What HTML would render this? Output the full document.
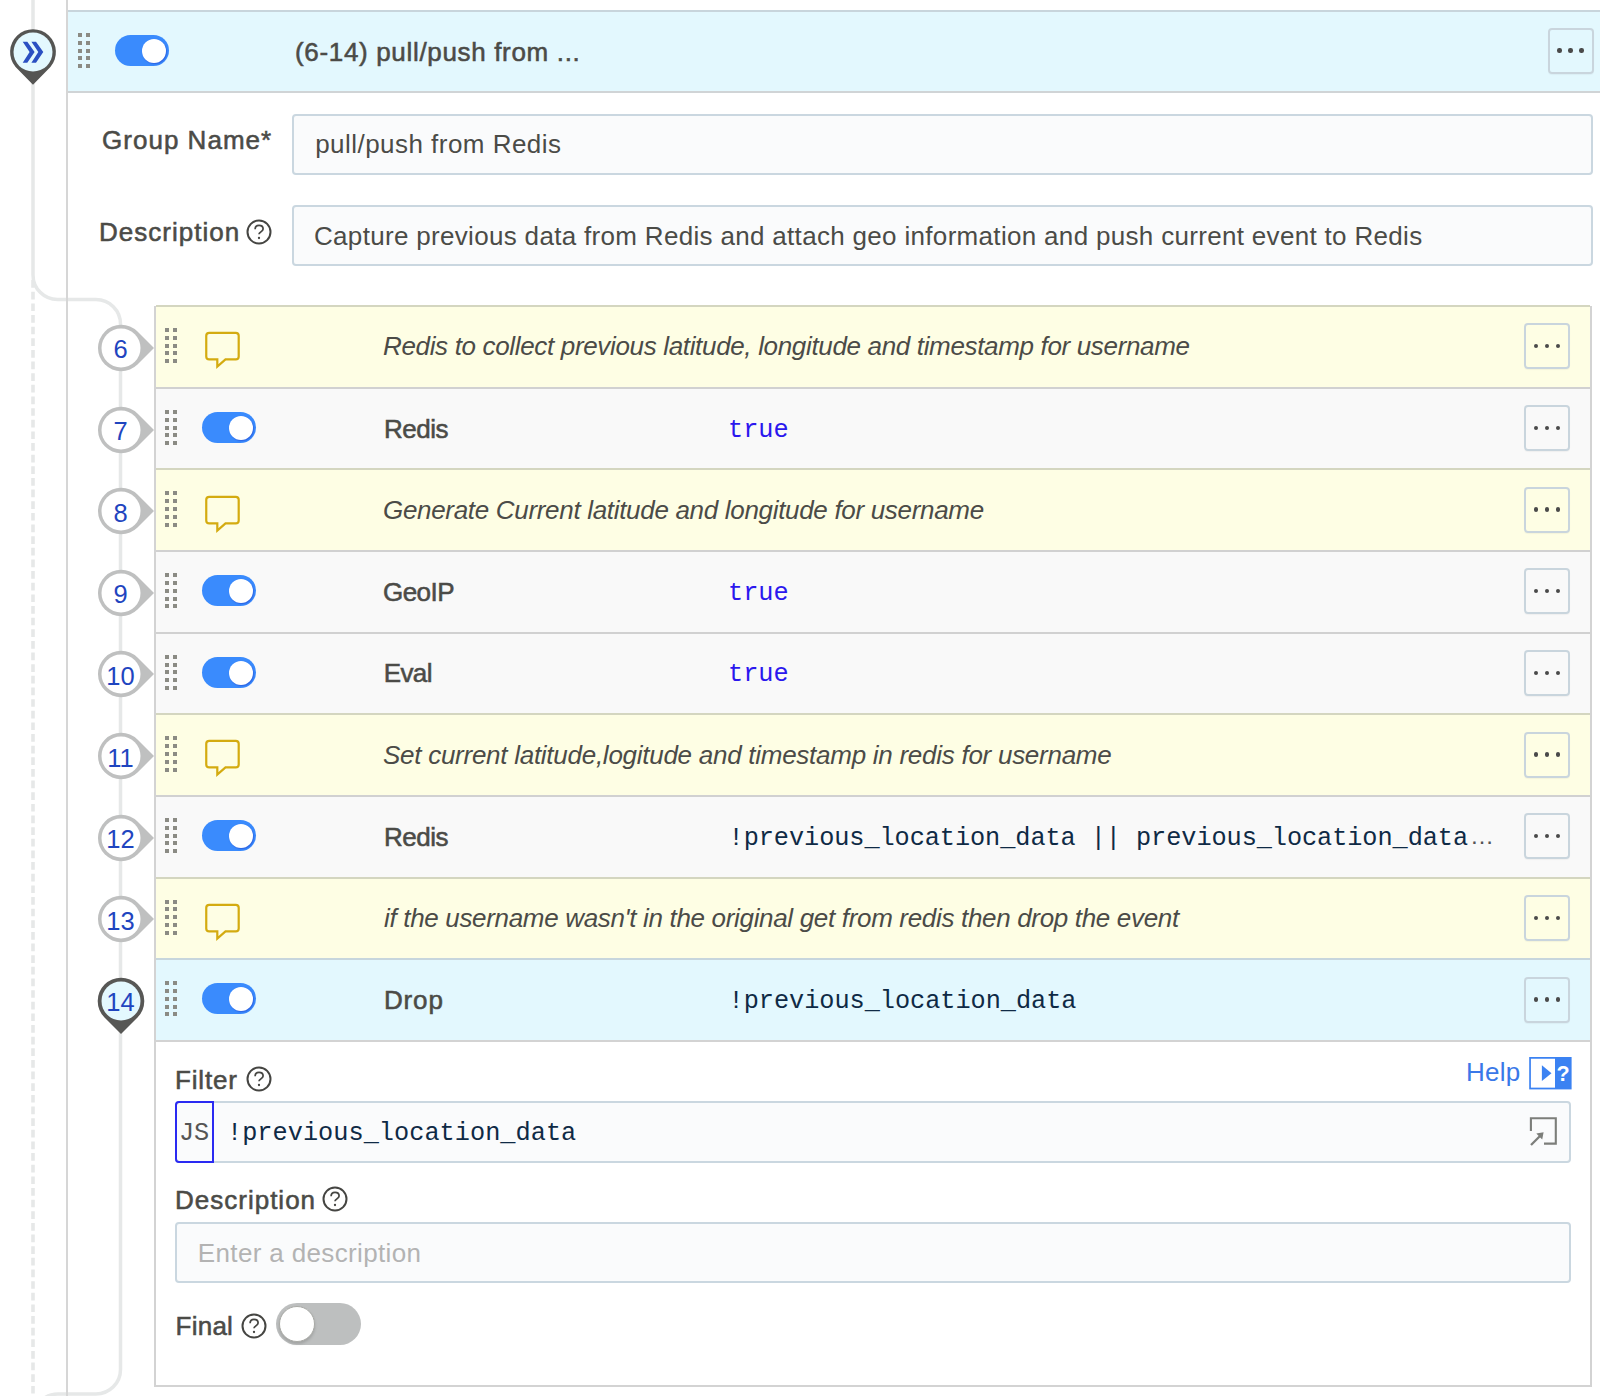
<!DOCTYPE html>
<html><head><meta charset="utf-8"><title>Pipeline</title><style>
*{box-sizing:border-box;margin:0;padding:0}
html,body{width:1600px;height:1396px;overflow:hidden;background:#fff}
body{position:relative;font-family:"Liberation Sans", sans-serif;color:#4b4b47}
.a{position:absolute}
.drag i{position:absolute;width:4px;height:4px;background:#8b8b84}
.tog{position:absolute;border-radius:20px;background:#3a8bfd}
.tog b{position:absolute;border-radius:50%;background:#fff;box-shadow:0.8px 1px 1.5px rgba(30,60,200,.55)}
.btn{position:absolute;border:2px solid #c9d5dd;border-radius:4px;box-shadow:0 1px 1px rgba(0,0,0,.04)}
.btn i{position:absolute;width:4.4px;height:4.4px;margin:-2px 0 0 -2px;border-radius:50%;background:#4a4a4a}
.t{position:absolute;white-space:nowrap;font-size:26px;line-height:30px}
.b{-webkit-text-stroke:0.55px currentColor}
.it{font-style:italic}
.mono{font-family:"Liberation Mono", monospace;font-size:25.27px;line-height:30px}
.inp{position:absolute;border:2px solid #cad7e0;border-radius:4px;background:#fafbfc}
</style></head>
<body>
<svg class="a" style="left:0;top:0" width="1600" height="1396"><path d="M33,0 V275 A24.5,24.5 0 0 0 57.5,299.5 H96 A24.5,24.5 0 0 1 120.5,324 V1369.5 A24.5,24.5 0 0 1 96,1394 H58 A24.5,24.5 0 0 0 33.5,1418.5" fill="none" stroke="#e6e8e8" stroke-width="3.5"/><line x1="33" y1="280.1" x2="33" y2="1396" stroke="#e6e8e8" stroke-width="3.6" stroke-dasharray="7.7 3.94"/></svg>
<div class="a" style="left:66px;top:0;width:2px;height:1396px;background:#d6d6d6"></div>
<div class="a" style="left:68px;top:10px;width:1532px;height:83px;background:#e3f8fe;border-top:2px solid #c8d5dc;border-bottom:2px solid #d0d4d6"></div>
<div class="drag"><i style="left:78px;top:33.0px"></i><i style="left:86px;top:33.0px"></i><i style="left:78px;top:40.8px"></i><i style="left:86px;top:40.8px"></i><i style="left:78px;top:48.6px"></i><i style="left:86px;top:48.6px"></i><i style="left:78px;top:56.4px"></i><i style="left:86px;top:56.4px"></i><i style="left:78px;top:64.2px"></i><i style="left:86px;top:64.2px"></i></div>
<div class="tog" style="left:115px;top:35px;width:54px;height:31px"><b style="width:24px;height:24px;left:26.5px;top:3.5px"></b></div>
<div id="title" class="t b" style="left:295.00px;top:36.50px;letter-spacing:0.666px">(6-14) pull/push from ...</div>
<div class="btn" style="left:1547.5px;top:27.5px;width:46px;height:46px"><i style="left:9.7px;top:20.7px"></i><i style="left:20.7px;top:20.7px"></i><i style="left:31.7px;top:20.7px"></i></div>
<svg class="a" style="left:0;top:20px" width="70" height="80" viewBox="0 20 70 80"><path d="M33,84.7 L15.6,67 A22.9,22.9 0 1 1 50.4,67 Z" fill="#555553"/><circle cx="33" cy="52.1" r="19.5" fill="#e3f8fe"/><path d="M22.7,41.8 H27.3 L34.6,52.1 L27.3,62.7 H22.7 L29.6,52.1 Z M31.4,41.8 H36 L43.3,52.1 L36,62.7 H31.4 L38.3,52.1 Z" fill="#2b4fc2"/></svg>
<div id="gname" class="t b" style="left:102.00px;top:125.21px;letter-spacing:1.020px">Group Name*</div>
<div class="inp" style="left:292px;top:113.5px;width:1301px;height:61px"></div>
<div id="gval" class="t " style="left:315.20px;top:129.25px;letter-spacing:0.463px">pull/push from Redis</div>
<div id="dlab" class="t b" style="left:99.00px;top:217.00px;letter-spacing:1.020px">Description</div>
<svg class="a" style="left:245.39999999999998px;top:217.5px" width="28" height="28" viewBox="-14 -14 28 28"><circle cx="0" cy="0" r="11.5" fill="none" stroke="#454542" stroke-width="2"/><path d="M-3.9,-2.8 C-3.9,-5.3 -2.2,-6.6 0,-6.6 C2.4,-6.6 4.1,-5 4.1,-3 C4.1,-0.6 0,0.2 0,2.2" fill="none" stroke="#454542" stroke-width="1.75"/><circle cx="0" cy="6" r="1.15" fill="#454542"/></svg>
<div class="inp" style="left:292px;top:205px;width:1301px;height:61px"></div>
<div id="dval" class="t " style="left:314.00px;top:220.50px;letter-spacing:0.317px">Capture previous data from Redis and attach geo information and push current event to Redis</div>
<div class="a" style="left:154px;top:306px;width:1438px;height:1081px;border:2px solid #d3d3d3;border-top:none;background:#fff"></div>
<div class="a" style="left:156px;top:306px;width:1434px;height:82.0px;background:#fefee4"></div>
<div class="a" style="left:156px;top:305px;width:1434px;height:2px;background:#d4d6c0"></div>
<div class="drag"><i style="left:165px;top:327.9px"></i><i style="left:173px;top:327.9px"></i><i style="left:165px;top:335.7px"></i><i style="left:173px;top:335.7px"></i><i style="left:165px;top:343.5px"></i><i style="left:173px;top:343.5px"></i><i style="left:165px;top:351.3px"></i><i style="left:173px;top:351.3px"></i><i style="left:165px;top:359.1px"></i><i style="left:173px;top:359.1px"></i></div>
<svg class="a" style="left:203px;top:331px" width="40" height="42" viewBox="0 0 40 42"><path d="M6.25,1.85 H32.7 Q35.7,1.85 35.7,4.85 V25.45 Q35.7,28.45 32.7,28.45 H22.5 L14.3,35.6 V28.45 H6.25 Q3.25,28.45 3.25,25.45 V4.85 Q3.25,1.85 6.25,1.85 Z" fill="none" stroke="#d4ab10" stroke-width="2.2" stroke-linejoin="miter"/></svg>
<div id="c6" class="t it" style="left:383.00px;top:331.30px;letter-spacing:-0.338px">Redis to collect previous latitude, longitude and timestamp for username</div>
<div class="btn" style="left:1524.3px;top:323.2px;width:46px;height:46px"><i style="left:9.7px;top:20.7px"></i><i style="left:20.7px;top:20.7px"></i><i style="left:31.7px;top:20.7px"></i></div>
<svg class="a" style="left:90px;top:317.8px" width="66" height="60" viewBox="-31 -30 66 60"><path d="M33,0 L16.5,16.5 A23.2,23.2 0 1 1 16.5,-16.5 Z" fill="#bfc0c0"/><circle cx="0" cy="0" r="19.5" fill="#fff"/></svg>
<div class="t" style="left:90.5px;width:60px;text-align:center;top:334.3px;font-size:25.5px;color:#1f45bf">6</div>
<div class="a" style="left:156px;top:388px;width:1434px;height:81.5px;background:#f9f9f9"></div>
<div class="a" style="left:156px;top:387px;width:1434px;height:2px;background:#d1d1d1"></div>
<div class="drag"><i style="left:165px;top:409.9px"></i><i style="left:173px;top:409.9px"></i><i style="left:165px;top:417.7px"></i><i style="left:173px;top:417.7px"></i><i style="left:165px;top:425.5px"></i><i style="left:173px;top:425.5px"></i><i style="left:165px;top:433.3px"></i><i style="left:173px;top:433.3px"></i><i style="left:165px;top:441.1px"></i><i style="left:173px;top:441.1px"></i></div>
<div class="tog" style="left:202px;top:412px;width:54px;height:31px"><b style="width:24px;height:24px;left:26.5px;top:3.5px"></b></div>
<div id="n7" class="t b" style="left:384.00px;top:413.61px;letter-spacing:-0.475px">Redis</div>
<div id="v7" class="t mono" style="left:728.00px;top:415.50px;color:#2b17ee">true</div>
<div class="btn" style="left:1524.3px;top:405.2px;width:46px;height:46px"><i style="left:9.7px;top:20.7px"></i><i style="left:20.7px;top:20.7px"></i><i style="left:31.7px;top:20.7px"></i></div>
<svg class="a" style="left:90px;top:399.6px" width="66" height="60" viewBox="-31 -30 66 60"><path d="M33,0 L16.5,16.5 A23.2,23.2 0 1 1 16.5,-16.5 Z" fill="#bfc0c0"/><circle cx="0" cy="0" r="19.5" fill="#fff"/></svg>
<div class="t" style="left:90.5px;width:60px;text-align:center;top:416.1px;font-size:25.5px;color:#1f45bf">7</div>
<div class="a" style="left:156px;top:469.5px;width:1434px;height:81.7px;background:#fefee4"></div>
<div class="a" style="left:156px;top:468px;width:1434px;height:2px;background:#d4d6c0"></div>
<div class="drag"><i style="left:165px;top:491.4px"></i><i style="left:173px;top:491.4px"></i><i style="left:165px;top:499.2px"></i><i style="left:173px;top:499.2px"></i><i style="left:165px;top:507.0px"></i><i style="left:173px;top:507.0px"></i><i style="left:165px;top:514.8px"></i><i style="left:173px;top:514.8px"></i><i style="left:165px;top:522.6px"></i><i style="left:173px;top:522.6px"></i></div>
<svg class="a" style="left:203px;top:494.5px" width="40" height="42" viewBox="0 0 40 42"><path d="M6.25,1.85 H32.7 Q35.7,1.85 35.7,4.85 V25.45 Q35.7,28.45 32.7,28.45 H22.5 L14.3,35.6 V28.45 H6.25 Q3.25,28.45 3.25,25.45 V4.85 Q3.25,1.85 6.25,1.85 Z" fill="none" stroke="#d4ab10" stroke-width="2.2" stroke-linejoin="miter"/></svg>
<div id="c8" class="t it" style="left:383.00px;top:494.80px;letter-spacing:-0.314px">Generate Current latitude and longitude for username</div>
<div class="btn" style="left:1524.3px;top:486.7px;width:46px;height:46px"><i style="left:9.7px;top:20.7px"></i><i style="left:20.7px;top:20.7px"></i><i style="left:31.7px;top:20.7px"></i></div>
<svg class="a" style="left:90px;top:481.2px" width="66" height="60" viewBox="-31 -30 66 60"><path d="M33,0 L16.5,16.5 A23.2,23.2 0 1 1 16.5,-16.5 Z" fill="#bfc0c0"/><circle cx="0" cy="0" r="19.5" fill="#fff"/></svg>
<div class="t" style="left:90.5px;width:60px;text-align:center;top:497.7px;font-size:25.5px;color:#1f45bf">8</div>
<div class="a" style="left:156px;top:551.2px;width:1434px;height:81.6px;background:#f9f9f9"></div>
<div class="a" style="left:156px;top:550px;width:1434px;height:2px;background:#d1d1d1"></div>
<div class="drag"><i style="left:165px;top:573.1px"></i><i style="left:173px;top:573.1px"></i><i style="left:165px;top:580.9px"></i><i style="left:173px;top:580.9px"></i><i style="left:165px;top:588.7px"></i><i style="left:173px;top:588.7px"></i><i style="left:165px;top:596.5px"></i><i style="left:173px;top:596.5px"></i><i style="left:165px;top:604.3px"></i><i style="left:173px;top:604.3px"></i></div>
<div class="tog" style="left:202px;top:575px;width:54px;height:31px"><b style="width:24px;height:24px;left:26.5px;top:3.5px"></b></div>
<div id="n9" class="t b" style="left:383.00px;top:576.71px;letter-spacing:-0.550px">GeoIP</div>
<div id="v9" class="t mono" style="left:728.00px;top:578.71px;color:#2b17ee">true</div>
<div class="btn" style="left:1524.3px;top:568.4000000000001px;width:46px;height:46px"><i style="left:9.7px;top:20.7px"></i><i style="left:20.7px;top:20.7px"></i><i style="left:31.7px;top:20.7px"></i></div>
<svg class="a" style="left:90px;top:562.8px" width="66" height="60" viewBox="-31 -30 66 60"><path d="M33,0 L16.5,16.5 A23.2,23.2 0 1 1 16.5,-16.5 Z" fill="#bfc0c0"/><circle cx="0" cy="0" r="19.5" fill="#fff"/></svg>
<div class="t" style="left:90.5px;width:60px;text-align:center;top:579.3px;font-size:25.5px;color:#1f45bf">9</div>
<div class="a" style="left:156px;top:632.8px;width:1434px;height:81.6px;background:#f9f9f9"></div>
<div class="a" style="left:156px;top:632px;width:1434px;height:2px;background:#d1d1d1"></div>
<div class="drag"><i style="left:165px;top:654.7px"></i><i style="left:173px;top:654.7px"></i><i style="left:165px;top:662.5px"></i><i style="left:173px;top:662.5px"></i><i style="left:165px;top:670.3px"></i><i style="left:173px;top:670.3px"></i><i style="left:165px;top:678.1px"></i><i style="left:173px;top:678.1px"></i><i style="left:165px;top:685.9px"></i><i style="left:173px;top:685.9px"></i></div>
<div class="tog" style="left:202px;top:657px;width:54px;height:31px"><b style="width:24px;height:24px;left:26.5px;top:3.5px"></b></div>
<div id="n10" class="t b" style="left:383.80px;top:658.21px;letter-spacing:-0.636px">Eval</div>
<div id="v10" class="t mono" style="left:728.00px;top:660.30px;color:#2b17ee">true</div>
<div class="btn" style="left:1524.3px;top:650.0px;width:46px;height:46px"><i style="left:9.7px;top:20.7px"></i><i style="left:20.7px;top:20.7px"></i><i style="left:31.7px;top:20.7px"></i></div>
<svg class="a" style="left:90px;top:644.4px" width="66" height="60" viewBox="-31 -30 66 60"><path d="M33,0 L16.5,16.5 A23.2,23.2 0 1 1 16.5,-16.5 Z" fill="#bfc0c0"/><circle cx="0" cy="0" r="19.5" fill="#fff"/></svg>
<div class="t" style="left:90.5px;width:60px;text-align:center;top:660.9px;font-size:25.5px;color:#1f45bf">10</div>
<div class="a" style="left:156px;top:714.4px;width:1434px;height:81.7px;background:#fefee4"></div>
<div class="a" style="left:156px;top:713px;width:1434px;height:2px;background:#d4d6c0"></div>
<div class="drag"><i style="left:165px;top:736.3px"></i><i style="left:173px;top:736.3px"></i><i style="left:165px;top:744.1px"></i><i style="left:173px;top:744.1px"></i><i style="left:165px;top:751.9px"></i><i style="left:173px;top:751.9px"></i><i style="left:165px;top:759.7px"></i><i style="left:173px;top:759.7px"></i><i style="left:165px;top:767.5px"></i><i style="left:173px;top:767.5px"></i></div>
<svg class="a" style="left:203px;top:739.4px" width="40" height="42" viewBox="0 0 40 42"><path d="M6.25,1.85 H32.7 Q35.7,1.85 35.7,4.85 V25.45 Q35.7,28.45 32.7,28.45 H22.5 L14.3,35.6 V28.45 H6.25 Q3.25,28.45 3.25,25.45 V4.85 Q3.25,1.85 6.25,1.85 Z" fill="none" stroke="#d4ab10" stroke-width="2.2" stroke-linejoin="miter"/></svg>
<div id="c11" class="t it" style="left:383.00px;top:739.71px;letter-spacing:-0.266px">Set current latitude,logitude and timestamp in redis for username</div>
<div class="btn" style="left:1524.3px;top:731.6px;width:46px;height:46px"><i style="left:9.7px;top:20.7px"></i><i style="left:20.7px;top:20.7px"></i><i style="left:31.7px;top:20.7px"></i></div>
<svg class="a" style="left:90px;top:726.0px" width="66" height="60" viewBox="-31 -30 66 60"><path d="M33,0 L16.5,16.5 A23.2,23.2 0 1 1 16.5,-16.5 Z" fill="#bfc0c0"/><circle cx="0" cy="0" r="19.5" fill="#fff"/></svg>
<div class="t" style="left:90.5px;width:60px;text-align:center;top:742.5px;font-size:25.5px;color:#1f45bf">11</div>
<div class="a" style="left:156px;top:796.1px;width:1434px;height:81.6px;background:#f9f9f9"></div>
<div class="a" style="left:156px;top:795px;width:1434px;height:2px;background:#d1d1d1"></div>
<div class="drag"><i style="left:165px;top:818.0px"></i><i style="left:173px;top:818.0px"></i><i style="left:165px;top:825.8px"></i><i style="left:173px;top:825.8px"></i><i style="left:165px;top:833.6px"></i><i style="left:173px;top:833.6px"></i><i style="left:165px;top:841.4px"></i><i style="left:173px;top:841.4px"></i><i style="left:165px;top:849.2px"></i><i style="left:173px;top:849.2px"></i></div>
<div class="tog" style="left:202px;top:820px;width:54px;height:31px"><b style="width:24px;height:24px;left:26.5px;top:3.5px"></b></div>
<div id="n12" class="t b" style="left:384.00px;top:821.91px;letter-spacing:-0.475px">Redis</div>
<div id="v12" class="t mono" style="left:728.60px;top:823.61px;letter-spacing:-0.072px;color:#0f2a45">!previous_location_data || previous_location_data</div>
<div class="t" style="left:1470px;top:820.6px;color:#555;font-size:24px">…</div>
<div class="btn" style="left:1524.3px;top:813.3000000000001px;width:46px;height:46px"><i style="left:9.7px;top:20.7px"></i><i style="left:20.7px;top:20.7px"></i><i style="left:31.7px;top:20.7px"></i></div>
<svg class="a" style="left:90px;top:807.7px" width="66" height="60" viewBox="-31 -30 66 60"><path d="M33,0 L16.5,16.5 A23.2,23.2 0 1 1 16.5,-16.5 Z" fill="#bfc0c0"/><circle cx="0" cy="0" r="19.5" fill="#fff"/></svg>
<div class="t" style="left:90.5px;width:60px;text-align:center;top:824.2px;font-size:25.5px;color:#1f45bf">12</div>
<div class="a" style="left:156px;top:877.7px;width:1434px;height:81.6px;background:#fefee4"></div>
<div class="a" style="left:156px;top:877px;width:1434px;height:2px;background:#d4d6c0"></div>
<div class="drag"><i style="left:165px;top:899.6px"></i><i style="left:173px;top:899.6px"></i><i style="left:165px;top:907.4px"></i><i style="left:173px;top:907.4px"></i><i style="left:165px;top:915.2px"></i><i style="left:173px;top:915.2px"></i><i style="left:165px;top:923.0px"></i><i style="left:173px;top:923.0px"></i><i style="left:165px;top:930.8px"></i><i style="left:173px;top:930.8px"></i></div>
<svg class="a" style="left:203px;top:902.7px" width="40" height="42" viewBox="0 0 40 42"><path d="M6.25,1.85 H32.7 Q35.7,1.85 35.7,4.85 V25.45 Q35.7,28.45 32.7,28.45 H22.5 L14.3,35.6 V28.45 H6.25 Q3.25,28.45 3.25,25.45 V4.85 Q3.25,1.85 6.25,1.85 Z" fill="none" stroke="#d4ab10" stroke-width="2.2" stroke-linejoin="miter"/></svg>
<div id="c13" class="t it" style="left:384.00px;top:903.00px;letter-spacing:-0.326px">if the username wasn't in the original get from redis then drop the event</div>
<div class="btn" style="left:1524.3px;top:894.9000000000001px;width:46px;height:46px"><i style="left:9.7px;top:20.7px"></i><i style="left:20.7px;top:20.7px"></i><i style="left:31.7px;top:20.7px"></i></div>
<svg class="a" style="left:90px;top:889.3px" width="66" height="60" viewBox="-31 -30 66 60"><path d="M33,0 L16.5,16.5 A23.2,23.2 0 1 1 16.5,-16.5 Z" fill="#bfc0c0"/><circle cx="0" cy="0" r="19.5" fill="#fff"/></svg>
<div class="t" style="left:90.5px;width:60px;text-align:center;top:905.8px;font-size:25.5px;color:#1f45bf">13</div>
<div class="a" style="left:156px;top:959.3px;width:1434px;height:81.7px;background:#e3f8fe"></div>
<div class="a" style="left:156px;top:958px;width:1434px;height:2px;background:#c7d6dd"></div>
<div class="drag"><i style="left:165px;top:981.2px"></i><i style="left:173px;top:981.2px"></i><i style="left:165px;top:989.0px"></i><i style="left:173px;top:989.0px"></i><i style="left:165px;top:996.8px"></i><i style="left:173px;top:996.8px"></i><i style="left:165px;top:1004.6px"></i><i style="left:173px;top:1004.6px"></i><i style="left:165px;top:1012.4px"></i><i style="left:173px;top:1012.4px"></i></div>
<div class="tog" style="left:202px;top:983px;width:54px;height:31px"><b style="width:24px;height:24px;left:26.5px;top:3.5px"></b></div>
<div id="n14" class="t b" style="left:384.00px;top:984.75px;letter-spacing:0.833px">Drop</div>
<div id="v14" class="t mono" style="left:728.60px;top:986.71px;letter-spacing:-0.038px;color:#0f2a45">!previous_location_data</div>
<div class="btn" style="left:1524.3px;top:976.5px;width:46px;height:46px"><i style="left:9.7px;top:20.7px"></i><i style="left:20.7px;top:20.7px"></i><i style="left:31.7px;top:20.7px"></i></div>
<svg class="a" style="left:90px;top:970.9px" width="62" height="70" viewBox="-31 -30 62 70"><path d="M0,33 L-16.5,16.5 A23.3,23.3 0 1 1 16.5,16.5 Z" fill="#575755"/><circle cx="0" cy="0" r="19.5" fill="#e3f8fe"/></svg>
<div class="t" style="left:90.5px;width:60px;text-align:center;top:987.4px;font-size:25.5px;color:#1f45bf">14</div>
<div class="a" style="left:156px;top:1040px;width:1434px;height:2px;background:#d3d3d3"></div>
<div id="filt" class="t b" style="left:175.00px;top:1064.75px;letter-spacing:0.830px">Filter</div>
<svg class="a" style="left:244.5px;top:1065px" width="28" height="28" viewBox="-14 -14 28 28"><circle cx="0" cy="0" r="11.5" fill="none" stroke="#454542" stroke-width="2"/><path d="M-3.9,-2.8 C-3.9,-5.3 -2.2,-6.6 0,-6.6 C2.4,-6.6 4.1,-5 4.1,-3 C4.1,-0.6 0,0.2 0,2.2" fill="none" stroke="#454542" stroke-width="1.75"/><circle cx="0" cy="6" r="1.15" fill="#454542"/></svg>
<div id="help" class="t " style="left:1466.00px;top:1056.75px;letter-spacing:0.248px;color:#3a78e8">Help</div>
<svg class="a" style="left:1528px;top:1057px" width="44" height="33" viewBox="0 0 44 33"><rect x="1.2" y="0" width="42.4" height="32.4" fill="#3b82f2"/><rect x="2.9" y="1.75" width="24.1" height="28.9" fill="#fff"/><path d="M13.9,8.3 L23.5,16.2 L13.9,24 Z" fill="#3b82f2"/><text x="35" y="24" font-family="Liberation Sans" font-weight="bold" font-size="21.5" fill="#fff" text-anchor="middle">?</text></svg>
<div class="inp" style="left:175px;top:1101px;width:1396px;height:62px"></div>
<div class="a" style="left:175px;top:1101px;width:39px;height:62px;border:2px solid #2a2af2;border-radius:4px 0 0 4px"></div>
<div id="js" class="t mono" style="left:178.90px;top:1119.00px;color:#555">JS</div>
<div id="fcode" class="t mono" style="left:227.00px;top:1119.00px;letter-spacing:0.023px;color:#0f2a45">!previous_location_data</div>
<svg class="a" style="left:1525px;top:1114px" width="36" height="36" viewBox="0 0 36 36"><path d="M5.9,17 V4.2 H30.8 V29.6 H19" fill="none" stroke="#7c7e7a" stroke-width="2.1"/><path d="M6,31 L15.5,21.5" fill="none" stroke="#7c7e7a" stroke-width="2.3"/><path d="M18.6,18.2 L17.2,25.5 L11.3,19.6 Z" fill="#7c7e7a"/></svg>
<div id="desc2" class="t b" style="left:175.00px;top:1185.41px;letter-spacing:1.000px">Description</div>
<svg class="a" style="left:321.4px;top:1185px" width="28" height="28" viewBox="-14 -14 28 28"><circle cx="0" cy="0" r="11.5" fill="none" stroke="#454542" stroke-width="2"/><path d="M-3.9,-2.8 C-3.9,-5.3 -2.2,-6.6 0,-6.6 C2.4,-6.6 4.1,-5 4.1,-3 C4.1,-0.6 0,0.2 0,2.2" fill="none" stroke="#454542" stroke-width="1.75"/><circle cx="0" cy="6" r="1.15" fill="#454542"/></svg>
<div class="inp" style="left:175px;top:1221.5px;width:1396px;height:61px"></div>
<div id="ph" class="t " style="left:197.80px;top:1238.00px;letter-spacing:0.356px;color:#b3b3b3">Enter a description</div>
<div id="final" class="t b" style="left:175.60px;top:1311.41px;letter-spacing:0.232px">Final</div>
<svg class="a" style="left:239.5px;top:1311.5px" width="28" height="28" viewBox="-14 -14 28 28"><circle cx="0" cy="0" r="11.5" fill="none" stroke="#454542" stroke-width="2"/><path d="M-3.9,-2.8 C-3.9,-5.3 -2.2,-6.6 0,-6.6 C2.4,-6.6 4.1,-5 4.1,-3 C4.1,-0.6 0,0.2 0,2.2" fill="none" stroke="#454542" stroke-width="1.75"/><circle cx="0" cy="6" r="1.15" fill="#454542"/></svg>
<div class="a" style="left:276px;top:1303px;width:85px;height:42px;border-radius:21px;background:#bdbfbf"></div>
<div class="a" style="left:279px;top:1306px;width:36px;height:36px;border-radius:50%;background:#fff;border:1.5px solid #a9aaa6;box-shadow:0 2px 3px rgba(0,0,0,.15)"></div>
</body></html>
